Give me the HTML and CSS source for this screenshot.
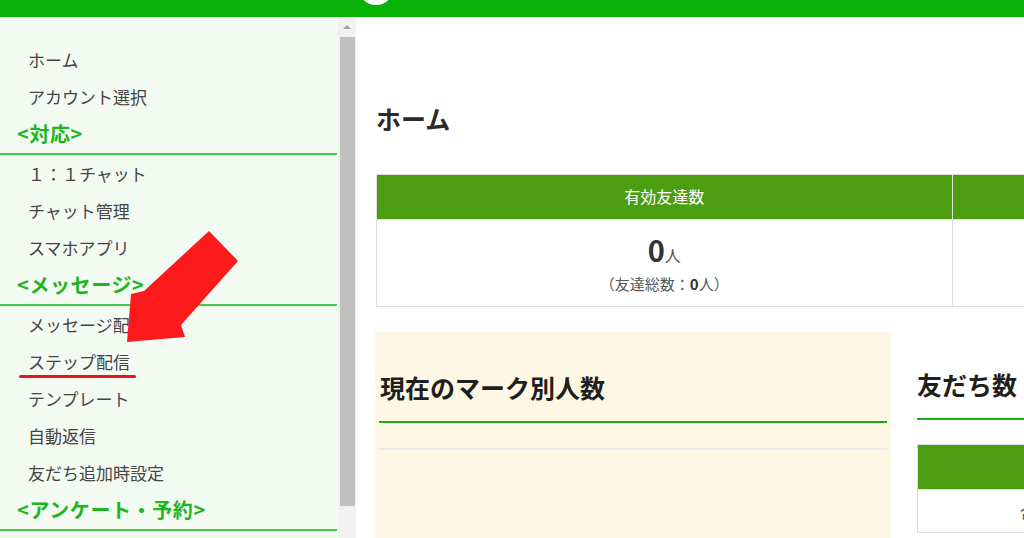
FILE: index.html
```html
<!DOCTYPE html>
<html lang="ja">
<head>
    <meta charset="UTF-8">
    <meta name="viewport" content="width=device-width, initial-scale=1.0">
    <title>ホーム</title>
    <link rel="stylesheet" href="styles.css">
</head>
<body>
    <header class="topbar">
        <span class="logo"></span>
    </header>

    <div class="layout">
        <aside class="sidebar">
            <nav class="nav">
                <a class="nav-item" href="#">ホーム</a>
                <a class="nav-item" href="#">アカウント選択</a>
                <div class="nav-head">&lt;対応&gt;</div>
                <a class="nav-item" href="#">１：１チャット</a>
                <a class="nav-item" href="#">チャット管理</a>
                <a class="nav-item" href="#">スマホアプリ</a>
                <div class="nav-head">&lt;メッセージ&gt;</div>
                <a class="nav-item" href="#">メッセージ配信</a>
                <a class="nav-item" href="#">ステップ配信</a>
                <a class="nav-item" href="#">テンプレート</a>
                <a class="nav-item" href="#">自動返信</a>
                <a class="nav-item" href="#">友だち追加時設定</a>
                <div class="nav-head">&lt;アンケート・予約&gt;</div>
            </nav>
            <div class="scrollbar">
                <span class="scroll-up"></span>
                <span class="scroll-thumb"></span>
            </div>
        </aside>

        <main class="main">
            <h1 class="page-title">ホーム</h1>

            <table class="stats">
                <thead>
                    <tr>
                        <th>有効友達数</th>
                        <th></th>
                    </tr>
                </thead>
                <tbody>
                    <tr>
                        <td>
                            <div class="count">0<span>人</span></div>
                            <div class="total">（友達総数：<b>0</b>人）</div>
                        </td>
                        <td></td>
                    </tr>
                </tbody>
            </table>

            <div class="panels">
                <section class="panel panel-mark">
                    <h2 class="panel-title">現在のマーク別人数</h2>
                    <div class="panel-rule"></div>
                </section>
                <section class="panel panel-friends">
                    <h2 class="panel-title">友だち数</h2>
                    <table class="friends">
                        <thead>
                            <tr>
                                <th class="col-first"></th>
                                <th></th>
                            </tr>
                        </thead>
                        <tbody>
                            <tr>
                                <td class="col-first">合計</td>
                                <td></td>
                            </tr>
                        </tbody>
                    </table>
                </section>
            </div>
        </main>
    </div>

    <!-- annotation: red arrow and underline -->
    <svg class="arrow" width="260" height="360" viewBox="0 0 260 360">
        <polygon points="127,342 131,294 144,291 209,231 238,261 181,325 185,337" fill="#fd1a1c"/>
    </svg>
    <span class="underline"></span>
</body>
</html>
```

FILE: styles.css
```css
/* Basic styling */
body {
    margin: 0;
    width: 1024px;
    height: 538px;
    overflow: hidden;
    position: relative;
    font-family: "Noto Sans CJK JP", "Noto Sans", sans-serif;
    color: #333;
    background: #fff;
}

.topbar {
    height: 17px;
    background-color: #07b307;
    position: relative;
    overflow: hidden;
}

.logo {
    position: absolute;
    left: 358px;
    top: -31px;
    width: 36px;
    height: 36px;
    border-radius: 50%;
    background: #fff;
}

.layout {
    display: flex;
    height: 521px;
}

/* Sidebar */
.sidebar {
    display: flex;
    width: 356px;
    flex-shrink: 0;
}

.nav {
    width: 338px;
    background-color: #f3faf2;
    padding-top: 24px;
    display: flex;
    flex-direction: column;
}

.nav-item {
    display: block;
    height: 37px;
    line-height: 37px;
    padding-left: 28px;
    font-size: 17px;
    color: #454545;
    text-decoration: none;
}

.nav-head {
    height: 38px;
    line-height: 38px;
    padding-left: 17px;
    font-size: 20px;
    letter-spacing: 0.6px;
    font-weight: bold;
    color: #1fb51f;
    border-bottom: 2px solid #45cb45;
    margin-right: 1px;
}

.scrollbar {
    width: 18px;
    background-color: #f1f1f1;
    display: flex;
    flex-direction: column;
    align-items: center;
}

.scroll-up {
    margin-top: 8px;
    width: 0;
    height: 0;
    border-left: 4px solid transparent;
    border-right: 4px solid transparent;
    border-bottom: 4px solid #a3a3a3;
}

.scroll-thumb {
    margin-top: 8px;
    width: 15px;
    height: 469px;
    background-color: #c1c1c1;
}

/* Main area */
.main {
    flex: 1;
    padding-left: 20px;
    overflow: hidden;
}

.page-title {
    margin: 83px 0 0;
    font-size: 25px;
    line-height: 36px;
    color: #2b2b2b;
}

.stats {
    margin-top: 38px;
    width: 1152px;
    border-collapse: collapse;
    table-layout: fixed;
}

.stats th, .stats td,
.friends th, .friends td {
    border: 1px solid #dedede;
    text-align: center;
}

.stats th, .friends th {
    height: 41px;
    padding: 0 0 3px;
    background-color: #4c9e10;
    color: #fff;
    font-size: 16px;
    font-weight: normal;
}

.stats td {
    height: 86px;
    padding: 0;
}

.count {
    font-size: 29px;
    font-weight: bold;
    line-height: 34px;
    color: #333;
}

.count span {
    font-size: 16px;
    font-weight: normal;
    color: #555;
}

.total {
    font-size: 15px;
    line-height: 22px;
    color: #555;
    margin-top: 1px;
}

.total b {
    color: #333;
}

.panels {
    display: grid;
    grid-template-columns: 516px 516px;
    gap: 26px;
    margin-top: 25px;
    margin-left: -1px;
}

.panel {
    height: 220px;
}

.panel-mark {
    background-color: #fdf7e4;
    padding: 37px 4px 0;
}

.panel-title {
    margin: 0;
    font-size: 25px;
    line-height: 36px;
    color: #1f1f1f;
    border-bottom: 2px solid #14b014;
}

.panel-mark .panel-title {
    padding: 0 0 16px 1px;
}

.panel-rule {
    margin-top: 25px;
    height: 2px;
    background-color: #e9ecec;
}

.panel-friends {
    padding-top: 34px;
}

.panel-friends .panel-title {
    padding-bottom: 16px;
}

.friends {
    margin-top: 24px;
    width: 600px;
    border-collapse: collapse;
    table-layout: fixed;
}

.friends th {
    height: 44px;
    padding: 0;
}

.friends .col-first {
    width: 234px;
}

.friends td {
    height: 40px;
    font-size: 15px;
    color: #444;
}

/* Annotation overlay */
.arrow {
    position: absolute;
    left: 0;
    top: 0;
    pointer-events: none;
}

.underline {
    position: absolute;
    left: 19px;
    top: 375px;
    width: 117px;
    height: 3px;
    border-radius: 2px;
    background-color: #e8151b;
}
```
